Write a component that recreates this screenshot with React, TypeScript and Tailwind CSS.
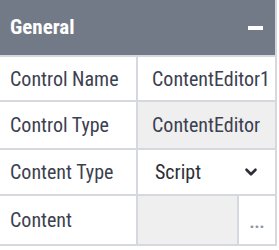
import { ChevronDown } from 'lucide-react';

const rows = [
  { label: 'Control Name', value: 'ContentEditor1', kind: 'text', h: 'h-[45px]' },
  { label: 'Control Type', value: 'ContentEditor', kind: 'readonly', h: 'h-[48px]' },
  { label: 'Content Type', value: 'Script', kind: 'select', h: 'h-[46px]' },
  { label: 'Content', value: '', kind: 'button', h: 'h-[50px]' },
];

export default function App() {
  return (
    <div className="w-[279px] h-[250px] bg-white font-['Liberation_Sans_Narrow','Roboto_Condensed','Liberation_Sans',sans-serif] text-[#3b4150]">
      <div className="w-[277px] border-r-2 border-[#d5d8de]">
        <div className="h-[57px] bg-[#737a87] flex items-center justify-between pl-[10px] pr-[12px] border-b-2 border-[#d5d8de]">
          <span className="text-white font-bold text-[21px]">General</span>
          <span className="block w-[15px] h-[4px] bg-white" />
        </div>
        {rows.map((r) => (
          <div key={r.label} className={`flex ${r.h} border-b-2 border-[#d5d8de]`}>
            <div className="w-[138px] shrink-0 border-r-2 border-[#d5d8de] pl-[10px] flex items-center text-[20px]">
              {r.label}
            </div>
            {r.kind === 'text' && (
              <div className="flex-1 flex items-center pl-[14px] text-[20px]">{r.value}</div>
            )}
            {r.kind === 'readonly' && (
              <div className="flex-1 flex items-center pl-[14px] text-[20px] bg-[#efefef]">{r.value}</div>
            )}
            {r.kind === 'select' && (
              <div className="flex-1 flex items-center justify-between pl-[17px] pr-[15px] text-[20px] text-[#2c2f36]">
                <span>{r.value}</span>
                <ChevronDown size={18} strokeWidth={3.5} className="text-[#2c2f36]" />
              </div>
            )}
            {r.kind === 'button' && (
              <div className="flex-1 flex">
                <div className="flex-1 bg-[#efefef] border-r-2 border-[#d5d8de]" />
                <div className="w-[36px] flex items-end justify-center pb-[13px] text-[17px] font-bold text-[#8a93a6] leading-none">
                  ...
                </div>
              </div>
            )}
          </div>
        ))}
      </div>
    </div>
  );
}
